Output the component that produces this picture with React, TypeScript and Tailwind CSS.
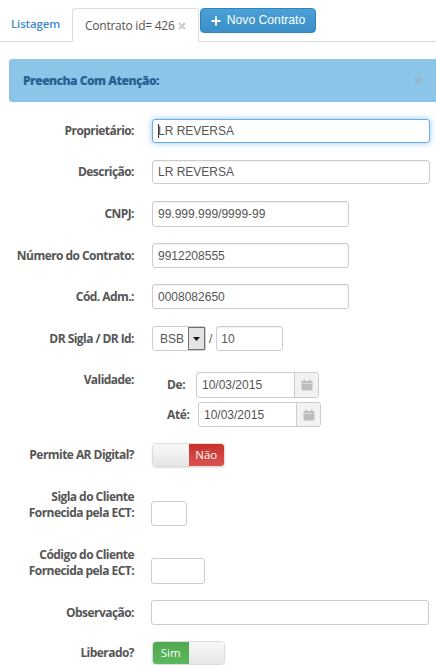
const label = "w-[134px] shrink-0 text-right text-[12px] font-bold tracking-[-0.55px] text-[#555] leading-[16px]";
const input = "h-full w-full rounded-[3px] border bg-white px-[5px] text-[12px] text-[#555] flex items-center";

function Field({ value, className = "", focus = false }: { value?: string; className?: string; focus?: boolean }) {
  return (
    <div className={`${input} ${focus ? "border-[#66afe9] shadow-[0_0_6px_rgba(102,175,233,0.7)]" : "border-[#ccc] shadow-[inset_0_1px_1px_rgba(0,0,0,0.06)]"} ${className}`}>
      {focus && <span className="mr-[-1px] h-[14px] w-px bg-[#333]" />}
      {value}
    </div>
  );
}

function Row({ text, className = "", children }: { text: React.ReactNode; className?: string; children: React.ReactNode }) {
  return (
    <div className={`flex items-center ${className}`}>
      <div className={label}>{text}</div>
      <div className="ml-[18px] flex h-full min-w-0 flex-1 items-center">{children}</div>
    </div>
  );
}

function Cross({ color }: { color: string }) {
  return (
    <svg width="8" height="8" viewBox="0 0 8 8" className="shrink-0">
      <path d="M1 1l6 6M7 1L1 7" stroke={color} strokeWidth="2" />
    </svg>
  );
}

function Calendar() {
  return (
    <svg width="12" height="12" viewBox="0 0 12 12" fill="#bdbdbd">
      <rect x="0.5" y="2" width="11" height="9.5" rx="1" />
      <rect x="2.5" y="0.5" width="1.5" height="2.5" />
      <rect x="8" y="0.5" width="1.5" height="2.5" />
      <rect x="0.5" y="4" width="11" height="0.7" fill="#e6e6e6" />
    </svg>
  );
}

function DateField({ text, labelClass, className }: { text: string; labelClass: string; className: string }) {
  return (
    <div className={`flex items-center ${className}`}>
      <div className={`${labelClass} font-['Open_Sans',sans-serif] text-[12px] font-bold tracking-[-0.4px] text-[#555]`}>{text}</div>
      <div className="flex h-full w-[123px] rounded-[3px] border border-[#ccc] bg-white">
        <div className="flex flex-1 items-center pl-[5px] text-[12px] text-[#555]">10/03/2015</div>
        <div className="flex w-[24px] items-center justify-center rounded-r-[3px] border-l border-[#ccc] bg-[#f2f2f2]">
          <Calendar />
        </div>
      </div>
    </div>
  );
}

function Toggle({ on }: { on: boolean }) {
  const knob = <div className="h-full w-[36px] bg-gradient-to-b from-[#f8f8f8] to-[#e6e6e6]" />;
  return (
    <div className="flex h-[24px] w-[73px] overflow-hidden rounded-[4px] border border-[#ddd] shadow-[0_1px_2px_rgba(0,0,0,0.12)]">
      {on ? (
        <>
          <div className="flex h-full w-[36px] items-center justify-center bg-gradient-to-b from-[#4fa84f] to-[#5cb85c] text-[11.5px] text-white">Sim</div>
          {knob}
        </>
      ) : (
        <>
          {knob}
          <div className="flex h-full w-[36px] items-center justify-center bg-gradient-to-b from-[#c9302c] to-[#d9534f] text-[11.5px] text-white">Não</div>
        </>
      )}
    </div>
  );
}

export default function App() {
  return (
    <div className="h-[665px] w-[436px] overflow-hidden bg-white font-['Open_Sans',sans-serif]">
      <div className="flex h-[42px] items-start border-b border-[#ddd]">
        <div className="flex h-[41px] w-[72px] items-center pl-[11px] pt-[7px] text-[11.5px] font-semibold tracking-[-0.15px] text-[#428bca]">Listagem</div>
        <div className="mt-[8px] flex h-[34px] w-[127px] items-center rounded-t-[4px] border border-b-0 border-[#ddd] bg-white pl-[12px] text-[12px] tracking-[-0.25px] text-[#555]">
          Contrato id= 426
          <span className="ml-[3px]"><Cross color="#ccc" /></span>
        </div>
        <div className="ml-[1px] mt-[8px] flex h-[25px] w-[116px] items-center justify-center rounded-[4px] border border-[#2d84bd] bg-gradient-to-b from-[#4ba0d8] to-[#3a8fc8] font-['Liberation_Sans',sans-serif] text-[12.2px] text-white">
          <svg width="10" height="10" viewBox="0 0 10 10" className="mr-[6px]" fill="white">
            <rect x="4" y="0.5" width="2" height="9" />
            <rect x="0.5" y="4" width="9" height="2" />
          </svg>
          Novo Contrato
        </div>
      </div>

      <div className="ml-[9px] mt-[17px] flex h-[43px] items-center justify-between rounded-l-[3px] bg-[#8bc5e8] pl-[14px] pr-[14px] text-[12px] font-extrabold tracking-[-0.5px] text-[#27608f]">
        Preencha Com Atenção:
        <Cross color="#9ab4c6" />
      </div>

      <Row text="Proprietário:" className="mt-[17px] h-[24px]">
        <div className="h-full w-[278px] font-['Liberation_Sans',sans-serif]"><Field value="LR REVERSA" focus /></div>
      </Row>
      <Row text="Descrição:" className="mt-[17px] h-[24px]">
        <div className="h-full w-[278px] font-['Liberation_Sans',sans-serif]"><Field value="LR REVERSA" /></div>
      </Row>
      <Row text="CNPJ:" className="mt-[17px] h-[26px]">
        <div className="h-full w-[197px] font-['Liberation_Sans',sans-serif]"><Field value="99.999.999/9999-99" /></div>
      </Row>
      <Row text="Número do Contrato:" className="mt-[16px] h-[25px]">
        <div className="h-full w-[197px] font-['Liberation_Sans',sans-serif]"><Field value="9912208555" /></div>
      </Row>
      <Row text="Cód. Adm.:" className="mt-[16px] h-[25px]">
        <div className="h-full w-[197px] font-['Liberation_Sans',sans-serif]"><Field value="0008082650" /></div>
      </Row>
      <Row text="DR Sigla / DR Id:" className="mt-[17px] h-[25px]">
        <div className="flex h-full items-center font-['Liberation_Sans',sans-serif] text-[12px] text-[#555]">
          <div className="flex h-full w-[54px] items-center justify-between rounded-[3px] border border-[#ccc] pl-[7px]">
            BSB
            <div className="flex h-full w-[17px] items-center justify-center border border-[#707070] bg-[#e4e4e4]">
              <svg width="7" height="4" viewBox="0 0 7 4"><path d="M0 0h7L3.5 4z" fill="#111" /></svg>
            </div>
          </div>
          <span className="ml-[3px] mr-[4px]">/</span>
          <div className="h-full w-[67px]"><Field value="10" className="pl-[4px]" /></div>
        </div>
      </Row>

      <div className="mt-[21px] flex">
        <div className={label}>Validade:</div>
        <div className="ml-[18px] font-['Liberation_Sans',sans-serif]">
          <DateField text="De:" labelClass="w-[44px] pl-[15px]" className="h-[26px]" />
          <DateField text="Até:" labelClass="w-[46px] pl-[15px]" className="mt-[4px] h-[25px]" />
        </div>
      </div>

      <Row text="Permite AR Digital?" className="mt-[16px] h-[24px]">
        <Toggle on={false} />
      </Row>

      <div className="mt-[20px] flex h-[39px] items-start">
        <div className={`${label} pt-[2px]`}>Sigla do Cliente<br />Fornecida pela ECT:</div>
        <div className="ml-[17px] mt-[14px] h-[25px] w-[36px] rounded-[3px] border border-[#ccc]" />
      </div>
      <div className="mt-[18px] flex h-[40px] items-start">
        <div className={`${label} pt-[3px]`}>Código do Cliente<br />Fornecida pela ECT:</div>
        <div className="ml-[17px] mt-[14px] h-[26px] w-[54px] rounded-[3px] border border-[#ccc]" />
      </div>
      <div className="mt-[16px] flex h-[25px] items-center">
        <div className={label}>Observação:</div>
        <div className="ml-[17px] h-full w-[278px] rounded-[3px] border border-[#ccc]" />
      </div>
      <Row text="Liberado?" className="mt-[16px] h-[24px]">
        <Toggle on={true} />
      </Row>
    </div>
  );
}
